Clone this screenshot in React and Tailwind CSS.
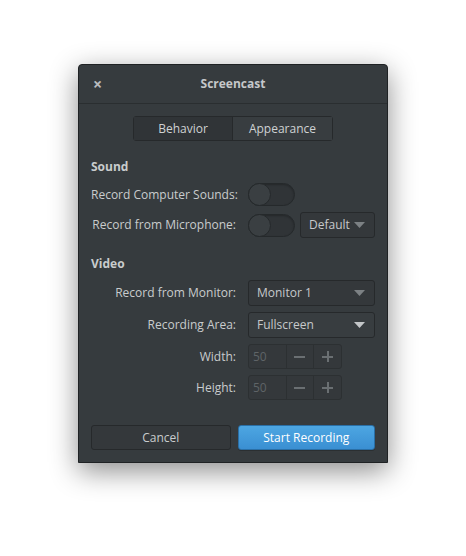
import React from "react";

const Switch = () => (
  <div className="relative h-[23px] w-[47px] rounded-full border border-[#25292b] bg-[#303437] shadow-[inset_0_1px_2px_rgba(0,0,0,0.25)]">
    <div className="absolute left-[-1px] top-[-1px] h-[23px] w-[23px] rounded-full border border-[#25292b] bg-[#3a3f42]" />
  </div>
);

const Arrow = ({ dim }) => (
  <svg width="11" height="6" viewBox="0 0 11 6" className="shrink-0">
    <path d="M0 0 H11 L5.5 6 Z" fill={dim ? "#7c8184" : "#c3c6c8"} />
  </svg>
);

const Combo = ({ label, dim, className = "" }) => (
  <div
    className={`flex h-[26px] items-center justify-between rounded-[3px] border border-[#26292b] pl-[8px] pr-[9px] ${
      dim ? "bg-[#34383b]" : "bg-[#383d40]"
    } ${className}`}
  >
    <span className="text-[#c6c9cb]">{label}</span>
    <Arrow dim={dim} />
  </div>
);

const Spin = () => (
  <div className="flex h-[25px] w-[94px] rounded-[3px] border border-[#2c3032] bg-[#34383b]">
    <div className="flex w-[37px] items-center pl-[4px] text-[#5f6467]">50</div>
    <div className="flex w-[28px] items-center justify-center border-l border-[#2c3032]">
      <div className="h-[2px] w-[11px] bg-[#6a6f72]" />
    </div>
    <div className="relative flex w-[28px] items-center justify-center border-l border-[#2c3032]">
      <div className="h-[2px] w-[11px] bg-[#6a6f72]" />
      <div className="absolute h-[11px] w-[2px] bg-[#6a6f72]" />
    </div>
  </div>
);

const Row = ({ label, children, className = "" }) => (
  <div className={`flex items-center ${className}`}>
    <div className="w-[145px] whitespace-nowrap text-right text-[#c9cccd]">{label}</div>
    <div className="ml-[12px] flex items-center gap-[5px]">{children}</div>
  </div>
);

export default function App() {
  return (
    <div
      className="flex min-h-[556px] w-full justify-center bg-white pt-[64px] text-[12px]"
      style={{ fontFamily: '"Open Sans", "Noto Sans", sans-serif' }}
    >
      <div className="flex h-[399px] w-[310px] flex-col rounded-t-[4px] border border-[#1f2224] bg-[#363b3e] shadow-[0_8px_28px_rgba(0,0,0,0.45)]">
        {/* header */}
        <div className="relative flex h-[39px] items-center justify-center border-b border-[#2a2e30]">
          <span className="absolute left-[14px] top-[11px] text-[16px] font-bold leading-none text-[#b9bcbe]">×</span>
          <span className="font-bold text-[#c5c8ca]">Screencast</span>
        </div>

        <div className="flex flex-col px-[12px]">
          {/* tabs */}
          <div className="mt-[12px] flex justify-center">
            <div className="flex h-[25px] rounded-[3px] border border-[#26292b]">
              <div className="flex w-[98px] items-center justify-center bg-[#303437] text-[#cfd2d3]">Behavior</div>
              <div className="flex w-[100px] items-center justify-center border-l border-[#26292b] bg-[#383d40] text-[#cfd2d3]">
                Appearance
              </div>
            </div>
          </div>

          <div className="mt-[20px] font-bold leading-none text-[#c9cccd]">Sound</div>
          <Row label="Record Computer Sounds:" className="mt-[10px]">
            <Switch />
          </Row>
          <Row label="Record from Microphone:" className="mt-[6px]">
            <Switch />
            <Combo label="Default" dim className="w-[75px]" />
          </Row>

          <div className="mt-[20px] font-bold leading-none text-[#c9cccd]">Video</div>
          <Row label="Record from Monitor:" className="mt-[10px]">
            <Combo label="Monitor 1" dim className="w-[127px]" />
          </Row>
          <Row label="Recording Area:" className="mt-[6px]">
            <Combo label="Fullscreen" className="w-[127px]" />
          </Row>
          <Row label="Width:" className="mt-[6px]">
            <Spin />
          </Row>
          <Row label="Height:" className="mt-[6px]">
            <Spin />
          </Row>

          {/* actions */}
          <div className="mt-[25px] flex gap-[7px]">
            <button className="h-[25px] w-[140px] rounded-[3px] border border-[#26292b] bg-[#34383b] text-[#c9cccd]">
              Cancel
            </button>
            <button className="h-[25px] w-[138px] rounded-[3px] border border-[#2a6fa6] bg-gradient-to-b from-[#4da6e2] to-[#3a8fd2] text-white shadow-[0_1px_0_rgba(0,0,0,0.2)]">
              Start Recording
            </button>
          </div>
        </div>
      </div>
    </div>
  );
}
